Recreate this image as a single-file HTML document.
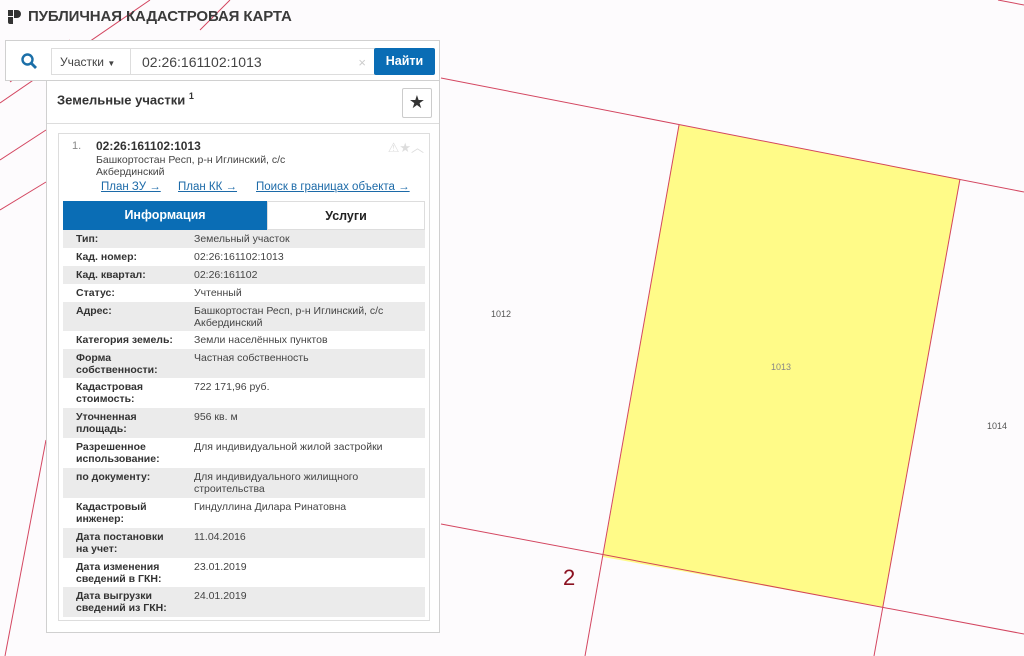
<!DOCTYPE html>
<html><head><meta charset="utf-8"><style>
*{margin:0;padding:0;box-sizing:border-box}
body{width:1024px;height:656px;overflow:hidden;background:#fdfbfd;font-family:"Liberation Sans","DejaVu Sans",sans-serif;position:relative;color:#333}
svg.map{position:absolute;left:0;top:0}
.title{position:absolute;left:28px;top:8px;font-weight:bold;font-size:15px;color:#3a3a3a;letter-spacing:-0.1px}
.logo{position:absolute;left:6px;top:8px}
.search{position:absolute;left:5px;top:40px;width:435px;height:41px;background:#fff;border:1px solid #d0d0d0}
.sel{position:absolute;left:45px;top:7px;width:80px;height:27px;border:1px solid #ddd;font-size:12px;color:#444;padding:6px 0 0 8px}
.inp{position:absolute;left:124px;top:7px;width:245px;height:27px;border:1px solid #ddd;border-left:none;font-size:14px;color:#444;padding:5px 0 0 12px}
.btn{position:absolute;left:368px;top:7px;width:61px;height:27px;background:#0a6db5;color:#fff;font-size:12.5px;font-weight:bold;text-align:center;padding-top:6px;border-radius:2px}
.res{position:absolute;left:46px;top:80px;width:394px;height:553px;background:#fff;border:1px solid #d0d0d0}
.hd{position:absolute;left:10px;top:10px;font-weight:bold;font-size:13px;color:#333}
.star{position:absolute;left:355px;top:7px;width:30px;height:30px;border:1px solid #ccc;border-radius:2px;text-align:center;font-size:18px;line-height:27px;color:#333}
.sep{position:absolute;left:0;top:42px;width:392px;border-top:1px solid #ddd}
.card{position:absolute;left:11px;top:52px;width:372px;height:488px;border:1px solid #ddd}
.row{position:absolute;left:4px;width:362px;font-size:10.5px;line-height:12px}
.row.g{background:#ebebeb}
.row .l{position:absolute;left:13px;top:3px;font-weight:bold;color:#333;width:100px}
.row .v{position:absolute;left:131px;top:3px;color:#444;width:225px}
.a{color:#1c6aa8}
</style></head><body>
<svg class="map" width="1024" height="656">
<polygon points="679,125 960,179 883,607 603,557" fill="#fffb88"/>
<g stroke="#cf3350" stroke-width="1" fill="none" opacity="0.9">
<line x1="441" y1="78" x2="1024" y2="192"/>
<line x1="441" y1="524" x2="1024" y2="634"/>
<line x1="679" y1="125" x2="585" y2="656"/>
<line x1="960" y1="179" x2="874" y2="656"/>
<line x1="998" y1="0" x2="1024" y2="5"/>
<line x1="0" y1="103" x2="150" y2="0"/>
<line x1="0" y1="160" x2="46" y2="130"/>
<line x1="0" y1="210" x2="46" y2="182"/>
<line x1="5" y1="656" x2="46" y2="440"/>
<line x1="230" y1="0" x2="200" y2="30"/>
<line x1="70" y1="40" x2="10" y2="82"/>
</g>
<text x="491" y="317" font-size="9" fill="#555" font-family="Liberation Sans">1012</text>
<text x="771" y="370" font-size="9" fill="#888" font-family="Liberation Sans">1013</text>
<text x="987" y="429" font-size="9" fill="#555" font-family="Liberation Sans">1014</text>
<text x="563" y="585" font-size="22" fill="#8b1020" font-family="Liberation Sans">2</text>
</svg>
<svg class="logo" width="16" height="18" viewBox="0 0 16 18"><path d="M2 2h5v6H2zM8 2h3a4 4 0 0 1 0 8H8zM2 9h5v7H4a2 2 0 0 1-2-2z" fill="#333"/></svg>
<div class="title">ПУБЛИЧНАЯ КАДАСТРОВАЯ КАРТА</div>
<div class="search">
<svg style="position:absolute;left:14px;top:11px" width="18" height="18" viewBox="0 0 18 18"><circle cx="7.5" cy="7.5" r="5" stroke="#1b6fa8" stroke-width="2.4" fill="none"/><line x1="11" y1="11" x2="16" y2="16" stroke="#1b6fa8" stroke-width="2.8"/></svg>
<div class="sel">Участки <span style="font-size:8px">▼</span></div>
<div class="inp">02:26:161102:1013<span style="position:absolute;right:8px;top:6px;color:#ccc;font-size:13px">×</span></div>
<div class="btn">Найти</div>
</div>
<div class="res">
<div class="hd">Земельные участки <sup style="font-size:9px">1</sup></div>
<div class="star">★</div>
<div class="sep"></div>
<div class="card">
<div style="position:absolute;left:13px;top:6px;font-size:11px;color:#888">1.</div>
<div style="position:absolute;left:37px;top:5px;font-size:12px;font-weight:bold;color:#333">02:26:161102:1013</div>
<div style="position:absolute;left:37px;top:20px;font-size:10.5px;color:#444;line-height:12px">Башкортостан Респ, р-н Иглинский, с/с<br>Акбердинский</div>
<div style="position:absolute;right:5px;top:3px;font-size:13px;color:#ddd">⚠★︿</div>
<div style="position:absolute;left:42px;top:47px;font-size:11.5px;color:#1c6aa8;text-decoration:underline">План ЗУ →</div>
<div style="position:absolute;left:119px;top:47px;font-size:11.5px;color:#1c6aa8;text-decoration:underline">План КК →</div>
<div style="position:absolute;left:197px;top:47px;font-size:11.5px;color:#1c6aa8;text-decoration:underline">Поиск в границах объекта →</div>
<div style="position:absolute;left:4px;top:67px;width:204px;height:29px;background:#0a6db5;color:#fff;font-weight:bold;font-size:12.5px;text-align:center;padding-top:7px">Информация</div>
<div style="position:absolute;left:208px;top:67px;width:158px;height:29px;border:1px solid #ddd;color:#222;font-weight:bold;font-size:12.5px;text-align:center;padding-top:7px">Услуги</div>
<div class="row g" style="top:96px;height:18px"><span class="l">Тип:</span><span class="v">Земельный участок</span></div>
<div class="row" style="top:114px;height:18px"><span class="l">Кад. номер:</span><span class="v a">02:26:161102:1013</span></div>
<div class="row g" style="top:132px;height:18px"><span class="l">Кад. квартал:</span><span class="v a">02:26:161102</span></div>
<div class="row" style="top:150px;height:18px"><span class="l">Статус:</span><span class="v">Учтенный</span></div>
<div class="row g" style="top:168px;height:29px"><span class="l">Адрес:</span><span class="v">Башкортостан Респ, р-н Иглинский, с/с Акбердинский</span></div>
<div class="row" style="top:197px;height:18px"><span class="l" style="width:120px">Категория земель:</span><span class="v">Земли населённых пунктов</span></div>
<div class="row g" style="top:215px;height:29px"><span class="l">Форма собственности:</span><span class="v">Частная собственность</span></div>
<div class="row" style="top:244px;height:30px"><span class="l">Кадастровая стоимость:</span><span class="v">722 171,96 руб.</span></div>
<div class="row g" style="top:274px;height:30px"><span class="l">Уточненная площадь:</span><span class="v">956 кв. м</span></div>
<div class="row" style="top:304px;height:30px"><span class="l">Разрешенное использование:</span><span class="v">Для индивидуальной жилой застройки</span></div>
<div class="row g" style="top:334px;height:30px"><span class="l">по документу:</span><span class="v">Для индивидуального жилищного строительства</span></div>
<div class="row" style="top:364px;height:30px"><span class="l">Кадастровый инженер:</span><span class="v">Гиндуллина Дилара Ринатовна</span></div>
<div class="row g" style="top:394px;height:30px"><span class="l">Дата постановки на учет:</span><span class="v">11.04.2016</span></div>
<div class="row" style="top:424px;height:29px"><span class="l">Дата изменения сведений в ГКН:</span><span class="v">23.01.2019</span></div>
<div class="row g" style="top:453px;height:30px"><span class="l">Дата выгрузки сведений из ГКН:</span><span class="v">24.01.2019</span></div>
</div>
</div>
</body></html>
